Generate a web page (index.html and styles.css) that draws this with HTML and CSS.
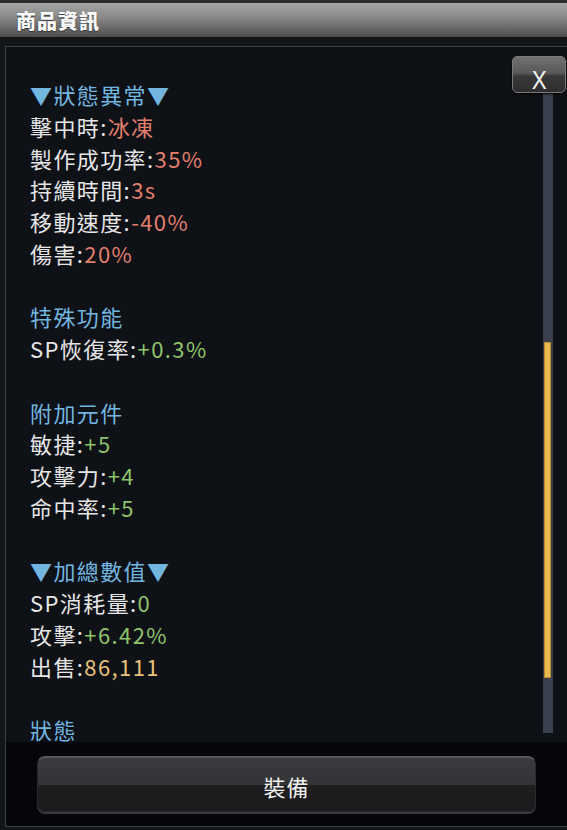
FILE: index.html
```
<!DOCTYPE html>
<html lang="zh-Hant">
<head>
<meta charset="utf-8">
<title>商品資訊</title>
<link rel="stylesheet" href="styles.css">
</head>
<body>
<div class="window">
  <div class="titlebar"><span class="title">商品資訊</span></div>
  <div class="strip"></div>
  <div class="panel">
    <div class="scroll">
      <div class="content">
        <div class="line head">▼狀態異常▼</div>
        <div class="line">擊中時:<span class="red">冰凍</span></div>
        <div class="line">製作成功率:<span class="red">35%</span></div>
        <div class="line">持續時間:<span class="red">3s</span></div>
        <div class="line">移動速度:<span class="red">-40%</span></div>
        <div class="line">傷害:<span class="red">20%</span></div>
        <div class="line blank"></div>
        <div class="line head">特殊功能</div>
        <div class="line">SP恢復率:<span class="green">+0.3%</span></div>
        <div class="line blank"></div>
        <div class="line head">附加元件</div>
        <div class="line">敏捷:<span class="green">+5</span></div>
        <div class="line">攻擊力:<span class="green">+4</span></div>
        <div class="line">命中率:<span class="green">+5</span></div>
        <div class="line blank"></div>
        <div class="line head">▼加總數值▼</div>
        <div class="line">SP消耗量:<span class="green">0</span></div>
        <div class="line">攻擊:<span class="green">+6.42%</span></div>
        <div class="line">出售:<span class="gold">86,111</span></div>
        <div class="line blank"></div>
        <div class="line head">狀態</div>
      </div>
      <div class="track"><div class="thumb"></div></div>
      <button class="close"><span class="x">X</span></button>
    </div>
    <div class="footer">
      <button class="equip">裝備</button>
    </div>
  </div>
</div>
</body>
</html>
```
FILE: styles.css
```
html, body {
  margin: 0;
  padding: 0;
  background: #141517;
  width: 567px;
  height: 830px;
  overflow: hidden;
  font-family: "Noto Sans CJK TC", "Noto Sans", sans-serif;
}
.window {
  width: 567px;
  height: 830px;
  display: flex;
  flex-direction: column;
}
.titlebar {
  height: 34px;
  border-top: 3px solid #2a2a2a;
  background: linear-gradient(#a6a6a6 0%, #8a8a8a 40%, #626262 80%, #4c4c4c 100%);
  display: flex;
  align-items: center;
  padding-left: 16px;
}
.title {
  color: #fafafa;
  font-weight: 900;
  font-size: 20px;
  letter-spacing: 1px;
  text-shadow: 0 1px 1px #333;
}
.strip {
  height: 9px;
  background: #141518;
}
.panel {
  margin-left: 5px;
  height: 779px;
  border-left: 1px solid #3c4149;
  border-top: 1px solid #3c4149;
  border-bottom: 1px solid #3c4149;
  display: flex;
  flex-direction: column;
}
.scroll {
  position: relative;
  height: 695px;
  overflow: hidden;
  background: #0e1116;
}
.content {
  padding-top: 32px;
  padding-left: 24px;
  font-size: 22px;
  letter-spacing: 1.4px;
  color: #e6e6e6;
}
.line {
  height: 31.75px;
  line-height: 31.75px;
  white-space: nowrap;
}
.head { color: #72b6e0; }
.red { color: #e27f6c; }
.green { color: #8fc36a; }
.gold { color: #e8c27a; }
.track {
  position: absolute;
  left: 537px;
  top: 46px;
  width: 10px;
  height: 640px;
  background: #3a404d;
}
.thumb {
  position: absolute;
  left: 1px;
  top: 249px;
  width: 7px;
  height: 336px;
  background: #e8b94e;
  box-shadow: inset 0 0 0 1px #b58a30;
}
.close {
  position: absolute;
  left: 506px;
  top: 9px;
  width: 54px;
  height: 37px;
  border: 1px solid #7a7a7a;
  border-radius: 5px;
  background: linear-gradient(#707070 0%, #5a5a5a 45%, #383838 55%, #2e2e2e 100%);
  color: #f4f4f4;
  font-family: "Liberation Sans", sans-serif;
  font-size: 25px;
  padding: 8px 0 0 0;
  line-height: 30px;
  box-shadow: 0 1px 2px #000;
}
.x {
  display: inline-block;
  transform: scaleX(0.9);
}
.footer {
  flex: 1;
  background: #04060b;
  display: flex;
  align-items: flex-start;
  padding-top: 14px;
  padding-left: 31px;
}
.equip {
  width: 499px;
  height: 56px;
  border: 1px solid #2a2a2d;
  border-top: 2px solid #57575c;
  border-radius: 8px;
  background: linear-gradient(#3b3b3f 0%, #333336 50%, #1f1f22 51%, #1a1a1d 100%);
  color: #f0f0f0;
  font-family: "Noto Sans CJK TC", sans-serif;
  font-size: 22px;
  letter-spacing: 1px;
  padding: 2px 0 0 0;
  box-shadow: 0 2px 0 #3a3a3e;
}
```
